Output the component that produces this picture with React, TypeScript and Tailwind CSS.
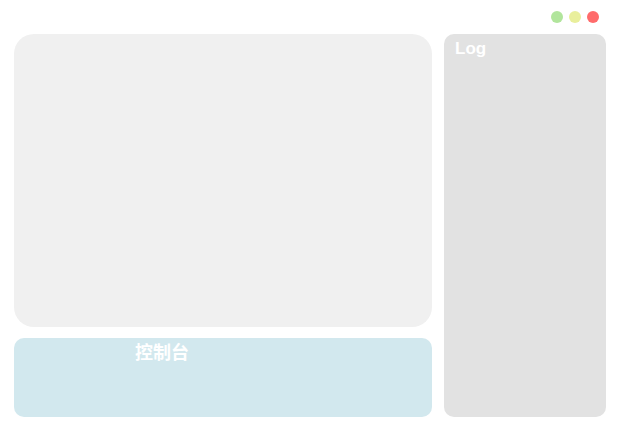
export default function App() {
  return (
    <div className="flex h-[433px] w-[621px] flex-col bg-white pb-[16px] pl-[14px] pr-[15px] font-['Liberation_Sans','Noto_Sans_CJK_SC',sans-serif]">
      <div className="flex h-[34px] items-center justify-end gap-[6px] pr-[7px]">
        <span className="h-[12px] w-[12px] rounded-full bg-[#b1e59c]" />
        <span className="h-[12px] w-[12px] rounded-full bg-[#e9ef9c]" />
        <span className="h-[12px] w-[12px] rounded-full bg-[#ff6b6b]" />
      </div>
      <div className="flex flex-1 gap-[12px]">
        <div className="flex w-[418px] flex-col gap-[11px]">
          <div className="h-[293px] rounded-[20px] bg-[#f0f0f0]" />
          <div className="flex-1 rounded-[10px] bg-[#d2e8ee] pl-[121px] pt-[3px]">
            <span className="text-[18px] font-bold leading-[24px] text-white">控制台</span>
          </div>
        </div>
        <div className="flex-1 rounded-[10px] bg-[#e2e2e2] pl-[11px] pt-[3px]">
          <span className="text-[17px] font-bold leading-[22px] text-white">Log</span>
        </div>
      </div>
    </div>
  );
}
